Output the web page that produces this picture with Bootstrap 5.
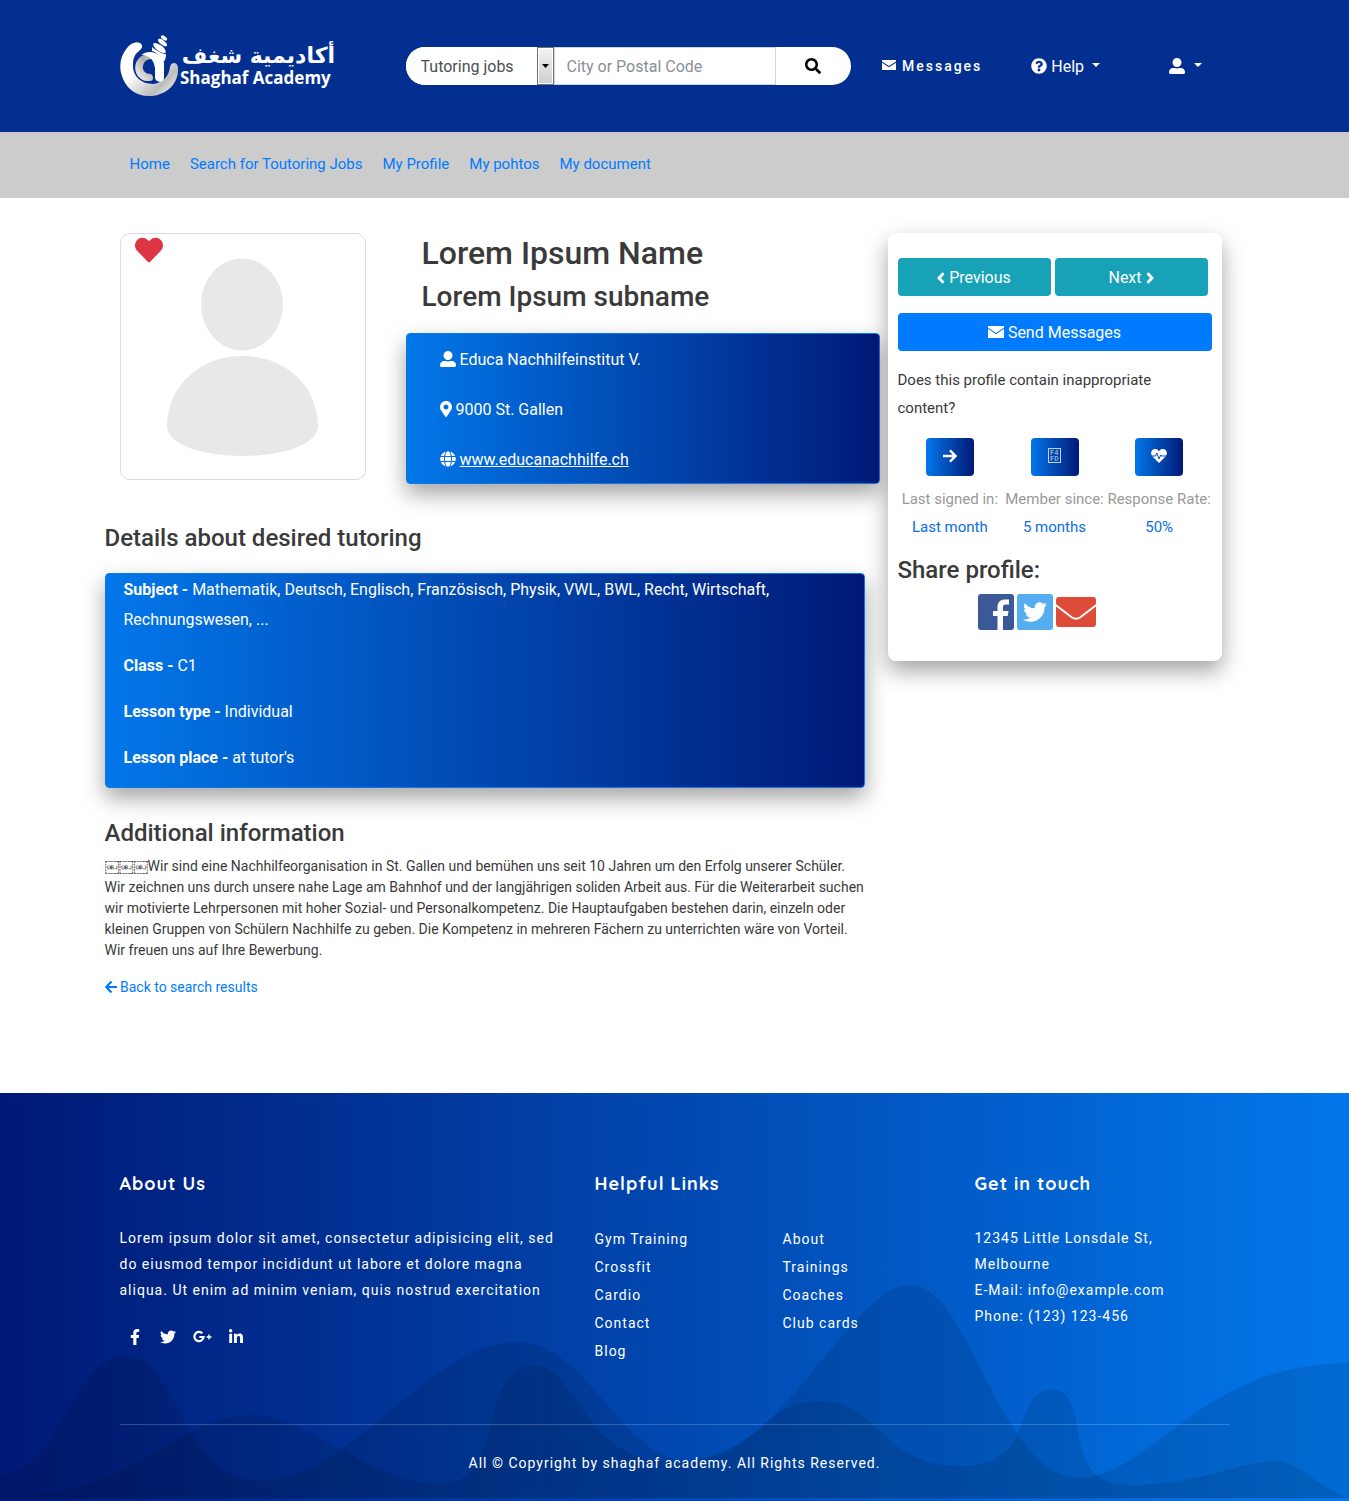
<!DOCTYPE html>
<html lang="en">
<head>
<meta charset="utf-8">
<meta name="viewport" content="width=device-width, initial-scale=1">
<title>Shaghaf Academy</title>
<link href="https://cdn.jsdelivr.net/npm/bootstrap@5.3.0/dist/css/bootstrap.min.css" rel="stylesheet">
<style>
body{font-family:Roboto,"Liberation Sans",sans-serif;color:#3a3a3a;font-size:14px;line-height:21px}
.container,.row{--bs-gutter-x:30px}
h1,h2,h3,h4{color:#3a3a3a;font-weight:500;line-height:1.2;margin:0}
.ico{width:16px;height:16px;fill:currentColor;vertical-align:-2px}
.site-head{background:#032f91;height:132px}
.logo-col{flex:0 0 301px;margin-right:-15px}
.search-box{width:445px;height:38px;border-radius:19px;overflow:hidden;background:#fff}
.search-box .form-select{flex:0 0 148px;border:0;border-radius:0;padding:2px 20px 0 15px;color:#495057;font-size:16px;
 background:#fff url("data:image/svg+xml,%3Csvg xmlns='http://www.w3.org/2000/svg' width='17' height='38'%3E%3Cdefs%3E%3ClinearGradient id='g' x2='0' y2='1'%3E%3Cstop stop-color='%23f2f2f2'/%3E%3Cstop offset='1' stop-color='%23cfcfcf'/%3E%3C/linearGradient%3E%3C/defs%3E%3Crect x='.5' y='.5' width='16' height='37' fill='%23fff' stroke='%23707070'/%3E%3Crect x='2' y='2' width='13' height='34' fill='url(%23g)'/%3E%3Cpath d='M5 17h7l-3.500 4z'/%3E%3C/svg%3E") no-repeat right center/17px 38px}
.search-box .form-control{border:1px solid #ced4da;border-radius:0;font-size:16px;padding:2px 12px 0}
.search-box .form-control::placeholder{color:#8a9097}
.search-box .btn{flex:0 0 75px;border:0;border-radius:0;color:#000;padding:2px 0 0}
.head-links{padding:0 28px 0 30px}
.head-links a{color:#fff;text-decoration:none;white-space:nowrap}
.head-links .drop{font-size:16px}
.head-links .msg-link{font-weight:500;letter-spacing:2px;font-size:14px;margin-right:49px}
.sub-nav{background:#ccc;font-size:15px;height:66px;padding-top:22px}
.sub-links{gap:20px;padding-left:10px}
.sub-nav a,.back-link{color:#007bff;text-decoration:none}
.page-main{padding-top:35px;padding-bottom:95px}
.photo-col{width:286px}
.photo-frame{width:246px;height:247px;border:1px solid #dcdcdc;border-radius:10px}
.fav{position:absolute;left:15px;top:3px;color:#dc3545;line-height:0}
.name-col{margin-right:-30px;padding-top:1px}
.name-main{font-size:32px}
.name-sub{font-size:28px;margin-top:8px}
.sec-title{font-size:24px}
.lift{box-shadow:0 10px 22px rgba(0,0,0,.36)}
.blue-panel{background:linear-gradient(to right,#0277ea,#001976);border:1px solid #0a78e6;border-radius:4px;color:#fff;font-size:16px;line-height:30px}
.info-panel{margin-top:19px;padding:11px 33px 8px}
.info-panel p{margin-bottom:20px}
.info-panel p:last-child{margin:0}
.info-panel a{color:#fff}
.detail-title{margin-top:40px}
.detail-panel{margin:20px -15px 31px;padding:1px 18px 0}
.detail-panel p:last-child{margin-bottom:14px}
.pull{margin-left:-15px;margin-right:-15px}
.side-card{margin:0 8px;padding:25px 10px 31px;border-radius:8px;background:#fff;font-size:15px;line-height:28px;position:relative}
.side-card .btn{height:38px;line-height:24px;border:0;border-radius:4px;color:#fff;font-size:16px;padding:7px 12px 5px}
.side-card .btn-teal{background:#18a2b8;flex:0 0 153px}
.side-card .btn-blue{background:#007bff;margin:17px 0 15px}
.side-card .btn-tile{width:48px;background:linear-gradient(to right,#0277ea,#001976);padding:0 0 4px;margin-bottom:9px}
.stat{flex:1 1 0;min-width:0;white-space:nowrap}
.stat-label{color:#999}
.stat-value{color:#0a6de4}
.share-title{margin-top:15px}
.share-row{gap:3px;padding:9px 0 0 80px}
.foot{background:linear-gradient(to left,#0277ea,#001976);color:#fff;padding-top:80px;letter-spacing:1px;line-height:26px}
.foot a{color:#fff;text-decoration:none}
.foot h3{font-family:Quicksand,Lato,sans-serif;font-weight:700;font-size:18px;color:#fff;line-height:22px;margin-bottom:30px}
.foot li{line-height:28px}
.foot address{line-height:26px}
.about-text{margin-bottom:22px}
.social{gap:17px;padding-left:7px}
.hills{position:absolute;left:0;bottom:3px;width:100%;height:213px}
.foot-links{gap:26px}
.foot-links ul{flex:1 1 0}
.copy{border-top:1px solid rgba(255,255,255,.2);padding:25px 0 25px;margin-top:59px}
</style>
</head>
<body>
<header class="site-head d-flex align-items-center">
 <div class="container d-flex align-items-center">
  <a class="logo-col text-decoration-none" href="#" aria-label="Shaghaf Academy">
   <svg width="216" height="64" viewBox="0 0 216 64">
    <defs><linearGradient id="ring" x1="0" y1="0" x2="1" y2="1"><stop offset=".4" stop-color="#fff"/><stop offset=".75" stop-color="#bdbdbd"/><stop offset="1" stop-color="#fff"/></linearGradient>
    <linearGradient id="bowl" x1="0" y1="1" x2="1" y2="0"><stop stop-color="#fff"/><stop offset=".6" stop-color="#aaa"/><stop offset="1" stop-color="#eee"/></linearGradient></defs>
    <path d="M20 9C16 7 11 9 7 14C1 21-1 30 1 39C5 55 17 63 31 62C48 61 59 48 58 34C58 28 51 27 50 33C49 43 42 49 33 50C21 50 12 42 13 30C13 24 15 20 19 17C23 14 23 11 20 9Z" fill="url(#ring)"/>
    <path d="M38 24C31 17 19 20 16 29C13 38 19 48 30 47C34 47 34 42 31 40C24 40 21 35 24 29C27 24 34 24 37 28Z" fill="url(#bowl)"/>
    <path d="M21 21C29 15 41 18 44 29V44C44 49 36 49 35 44V34C34 25 27 20 21 21Z" fill="#fff"/>
    <g fill="#fff"><ellipse cx="44" cy="4" rx="3.500" ry="1.800" transform="rotate(35 44 4)"/><ellipse cx="42.500" cy="8.500" rx="5.500" ry="2.300" transform="rotate(38 42.500 8.500)"/><ellipse cx="39.500" cy="14" rx="7.500" ry="3" transform="rotate(36 39.500 14)"/><path d="M32 13C37 17 42 20 46 20C46 24 45 27 43 28C41 22 36 18 32 17Z"/></g>
    <text x="215" y="29" text-anchor="end" font-family="DejaVu Sans" font-weight="700" font-size="22" fill="#fff">أكاديمية شغف</text>
    <text x="60" y="50" font-family="Open Sans,sans-serif" font-weight="700" font-size="17" fill="#fff">Shaghaf Academy</text>
   </svg>
  </a>
  <form class="search-box d-flex flex-shrink-0" onsubmit="return false">
   <select class="form-select" aria-label="Search type"><option>Tutoring jobs</option></select>
   <input class="form-control" type="text" placeholder="City or Postal Code" aria-label="City or Postal Code">
   <button class="btn" type="submit" aria-label="Search"><svg class="ico" viewBox="0 0 512 512"><path d="M505 442.700L405.300 343c-4.500-4.500-10.600-7-17-7H372c27.600-35.300 44-79.700 44-128C416 93.100 322.900 0 208 0S0 93.100 0 208s93.100 208 208 208c48.300 0 92.700-16.400 128-44v16.300c0 6.400 2.500 12.500 7 17l99.700 99.700c9.400 9.400 24.600 9.400 33.900 0l28.300-28.300c9.400-9.400 9.400-24.600.1-34zM208 336c-70.700 0-128-57.200-128-128 0-70.700 57.200-128 128-128 70.700 0 128 57.200 128 128 0 70.700-57.200 128-128 128z"/></svg></button>
  </form>
  <nav class="head-links d-flex flex-grow-1 align-items-center">
   <a class="msg-link" href="#"><svg class="ico" viewBox="0 0 16 16"><path d="M1 3h14v1.500L8 9 1 4.500zM1 5.700l7 4.600 7-4.600V13H1z"/></svg> Messages</a>
   <a class="drop dropdown-toggle" href="#"><svg class="ico" viewBox="0 0 512 512"><path d="M504 256c0 137-111 248-248 248S8 393 8 256C8 119 119 8 256 8s248 111 248 248zM262.700 90c-54.500 0-89.300 23-116.600 63.800-3.500 5.300-2.400 12.400 2.700 16.200l34.700 26.300c5.200 4 12.600 3 16.700-2.100 17.900-22.700 30.100-35.800 57.300-35.800 20.400 0 45.700 13.100 45.700 33 0 15-12.400 22.600-32.500 34C247.100 238.500 216 255 216 296v4c0 6.600 5.400 12 12 12h56c6.600 0 12-5.400 12-12v-1.300c0-28.500 83.200-29.700 83.200-106.700 0-58-60.200-102-116.500-102zM256 338c-25.400 0-46 20.600-46 46s20.600 46 46 46 46-20.600 46-46-20.600-46-46-46z"/></svg> Help&nbsp;</a>
   <a class="drop dropdown-toggle ms-auto" href="#" aria-label="Account"><svg class="ico" viewBox="0 0 512 512"><use href="#p-user"/></svg>&nbsp;</a>
  </nav>
 </div>
</header>

<svg width="0" height="0" class="position-absolute" aria-hidden="true"><defs>
 <path id="p-user" d="M256 288c79.500 0 144-64.500 144-144S335.500 0 256 0 112 64.500 112 144s64.500 144 144 144zm128 32h-55.100c-22.200 10.200-46.900 16-72.900 16s-50.600-5.800-72.900-16H128C57.300 320 0 377.300 0 448v16c0 26.500 21.500 48 48 48h416c26.500 0 48-21.500 48-48v-16c0-70.700-57.300-128-128-128z"/>
 <path id="p-tw" d="M459.400 151.700c.3 4.500.3 9.100.3 13.600 0 138.700-105.600 298.600-298.600 298.600-59.500 0-114.700-17.200-161.100-47.100 8.400 1 16.600 1.300 25.300 1.300 49.100 0 94.200-16.600 130.300-44.800-46.100-1-84.800-31.200-98.100-72.800 6.500 1 13 1.600 19.800 1.600 9.400 0 18.800-1.300 27.600-3.600-48.100-9.700-84.100-52-84.100-103v-1.300c14 7.800 30.200 12.700 47.400 13.300-28.300-18.800-46.800-51-46.800-87.400 0-19.500 5.200-37.400 14.300-53 51.700 63.700 129.300 105.300 216.400 109.800-1.600-7.800-2.600-15.900-2.600-24 0-57.800 46.800-104.900 104.900-104.900 30.200 0 57.500 12.700 76.700 33.100 23.700-4.500 46.500-13.300 66.600-25.300-7.800 24.400-24.400 44.800-46.100 57.800 21.100-2.300 41.600-8.100 60.400-16.200-14.300 20.800-32.200 39.300-52.600 54.300z"/>
 <path id="p-fb" d="M279.100 288l14.200-92.700h-88.900v-60.100c0-25.400 12.400-50.100 52.200-50.100h40.400V6.300S260.400 0 225.400 0c-73.200 0-121.100 44.400-121.100 124.700v70.600H22.900V288h81.400v224h100.200V288z"/>
</defs></svg>

<nav class="sub-nav">
 <div class="container">
  <div class="sub-links d-flex">
   <a href="#">Home</a><a href="#">Search for Toutoring Jobs</a><a href="#">My Profile</a><a href="#">My pohtos</a><a href="#">My document</a>
  </div>
 </div>
</nav>

<main class="container page-main">
 <div class="row">
  <div class="col-8">
   <div class="d-flex">
    <div class="photo-col flex-shrink-0 position-relative">
     <div class="photo-frame">
      <svg width="244" height="245" viewBox="0 0 244 245" role="img" aria-label="Profile photo"><g fill="#e8e8e8"><ellipse cx="121" cy="70.500" rx="41" ry="46"/><path d="M46 192C47 150 80 122 121.500 122S196 150 197 192C197 211 160 222 121.500 222S46 211 46 192Z"/></g></svg>
     </div>
     <span class="fav"><svg width="28" height="28" viewBox="0 0 512 512" fill="currentColor"><path d="M462.300 62.600C407.500 15.900 326 24.300 275.700 76.200L256 96.500l-19.700-20.300C186.100 24.300 104.500 15.900 49.700 62.600c-62.800 53.600-66.100 149.800-9.900 207.900l193.500 199.800c12.500 12.900 32.800 12.900 45.300 0l193.500-199.800c56.300-58.100 53-154.300-9.800-207.900z"/></svg></span>
    </div>
    <div class="name-col flex-grow-1">
     <div class="ps-3">
      <h1 class="name-main">Lorem Ipsum Name</h1>
      <h2 class="name-sub">Lorem Ipsum subname</h2>
     </div>
     <div class="blue-panel lift info-panel">
      <p><svg class="ico" viewBox="0 0 512 512"><use href="#p-user"/></svg> Educa Nachhilfeinstitut V.</p>
      <p><svg class="ico" style="width:12px" viewBox="0 0 384 512"><path d="M172.300 501.700C27 291 0 269.400 0 192 0 86 86 0 192 0s192 86 192 192c0 77.400-27 99-172.300 309.700-9.500 13.800-29.900 13.800-39.400 0zM192 272c44.200 0 80-35.800 80-80s-35.800-80-80-80-80 35.800-80 80 35.800 80 80 80z"/></svg> 9000 St. Gallen</p>
      <p><svg class="ico" viewBox="0 0 496 512"><path d="M336.500 160C322 70.700 287.800 8 248 8s-74 62.700-88.500 152h177zM152 256c0 22.200 1.200 43.500 3.300 64h185.300c2.100-20.500 3.300-41.800 3.300-64s-1.200-43.500-3.300-64H155.300c-2.100 20.500-3.300 41.800-3.300 64zm324.700-96c-28.600-67.900-86.500-120.400-158-141.600 24.400 33.800 41.200 84.700 50 141.600h108zM177.200 18.400C105.800 39.600 47.800 92.100 19.300 160h108c8.700-56.900 25.500-107.800 49.900-141.600zM487.400 192H372.700c2.100 21 3.300 42.500 3.300 64s-1.200 43-3.300 64h114.600c5.500-20.500 8.600-41.800 8.600-64s-3.100-43.500-8.500-64zM120 256c0-21.500 1.200-43 3.300-64H8.600C3.200 212.500 0 233.800 0 256s3.200 43.500 8.600 64h114.600c-2-21-3.200-42.500-3.200-64zm39.500 96c14.500 89.300 48.700 152 88.500 152s74-62.700 88.500-152h-177zm159.300 141.600c71.400-21.200 129.400-73.700 158-141.600h-108c-8.800 56.900-25.600 107.800-50 141.600zM19.300 352c28.600 67.900 86.500 120.400 158 141.600-24.400-33.800-41.200-84.700-50-141.600h-108z"/></svg> <a href="#">www.educanachhilfe.ch</a></p>
     </div>
    </div>
   </div>
   <h3 class="sec-title detail-title pull">Details about desired tutoring</h3>
   <div class="blue-panel lift detail-panel">
    <p><b>Subject -</b> Mathematik, Deutsch, Englisch, Französisch, Physik, VWL, BWL, Recht, Wirtschaft, Rechnungswesen, ...</p>
    <p><b>Class -</b> C1</p>
    <p><b>Lesson type -</b> Individual</p>
    <p><b>Lesson place -</b> at tutor's</p>
   </div>
   <div class="pull">
    <h3 class="sec-title mb-2">Additional information</h3>
    <p>&#xFFFC;&#xFFFC;&#xFFFC;Wir sind eine Nachhilfeorganisation in St. Gallen und bemühen uns seit 10 Jahren um den Erfolg unserer Schüler. Wir zeichnen uns durch unsere nahe Lage am Bahnhof und der langjährigen soliden Arbeit aus. Für die Weiterarbeit suchen wir motivierte Lehrpersonen mit hoher Sozial- und Personalkompetenz. Die Hauptaufgaben bestehen darin, einzeln oder kleinen Gruppen von Schülern Nachhilfe zu geben. Die Kompetenz in mehreren Fächern zu unterrichten wäre von Vorteil. Wir freuen uns auf Ihre Bewerbung.</p>
    <a class="back-link" href="#"><svg class="ico" style="width:12px;height:14px" viewBox="0 0 12 14"><path d="M6.500 1.500L1.300 7l5.200 5.500M1.500 7H12" fill="none" stroke="currentColor" stroke-width="2.200"/></svg> Back to search results</a>
   </div>
  </div>

  <aside class="col-4">
   <div class="side-card lift">
    <div class="d-flex gap-1">
     <button class="btn btn-teal" type="button"><svg width="8" height="12" viewBox="0 0 8 12" style="vertical-align:-1px"><path d="M6.500 1.200L2 6l4.500 4.800" fill="none" stroke="#fff" stroke-width="2.800"/></svg> Previous</button>
     <button class="btn btn-teal" type="button">Next <svg width="8" height="12" viewBox="0 0 8 12" style="vertical-align:-1px"><path d="M1.500 1.200L6 6l-4.500 4.800" fill="none" stroke="#fff" stroke-width="2.800"/></svg></button>
    </div>
    <button class="btn btn-blue w-100" type="button"><svg class="ico" viewBox="0 0 16 16"><path d="M0 2h16v1.500L8 9 0 3.500zM0 4.700L8 10.200l8-5.500V14H0z"/></svg> Send Messages</button>
    <p class="mb-3 pe-5">Does this profile contain inappropriate content?</p>
    <div class="d-flex text-center">
     <div class="stat"><button class="btn btn-tile" type="button" aria-label="Last signed in"><svg width="14" height="14" viewBox="0 0 14 14"><path d="M0 7h12M7 1.300L12.600 7 7 12.700" fill="none" stroke="#fff" stroke-width="2.400"/></svg></button><div class="stat-label">Last signed in:</div><div class="stat-value">Last month</div></div>
     <div class="stat"><button class="btn btn-tile" type="button" aria-label="Member since"><svg width="13" height="15" viewBox="0 0 13 15" fill="#c5d2ee"><rect x=".5" y=".5" width="12" height="14" fill="none" stroke="#c5d2ee"/><text x="2" y="7" font-size="7" font-family="Liberation Mono">F4</text><text x="2" y="13" font-size="7" font-family="Liberation Mono">FD</text></svg></button><div class="stat-label">Member since:</div><div class="stat-value">5 months</div></div>
     <div class="stat"><button class="btn btn-tile" type="button" aria-label="Response rate"><svg width="16" height="14" viewBox="0 0 16 14"><path d="M8 2.200C6-.6 2.500-.4 1 1.600-.4 3.600 0 6 1.500 7.500L8 14l6.500-6.500C16 6 16.400 3.600 15 1.600 13.500-.4 10-.6 8 2.200Z" fill="#fff"/><path d="M0 7h4.500l1.300-3L8 10l1.700-4 .8 1H16" fill="none" stroke="#0349ab" stroke-width="1"/></svg></button><div class="stat-label">Response Rate:</div><div class="stat-value">50%</div></div>
    </div>
    <h3 class="sec-title share-title">Share profile:</h3>
    <div class="share-row d-flex align-items-center">
     <a href="#" aria-label="Facebook" class="d-flex"><svg width="36" height="36" viewBox="0 0 36 36"><rect width="36" height="36" rx="3" fill="#3b5998"/><path d="M19.500 36V22H15v-5h4.500v-4c0-5 3-7.500 7.500-7.500H31v5h-3c-2.300 0-3 1-3 3V17h5.500l-.8 5H25v14z" fill="#fff"/></svg></a>
     <a href="#" aria-label="Twitter" class="d-flex"><svg width="36" height="36" viewBox="0 0 36 36"><rect width="36" height="36" rx="3" fill="#55acee"/><svg x="6" y="6" width="24" height="24" viewBox="0 0 512 512" fill="#fff"><use href="#p-tw"/></svg></svg></a>
     <a href="#" aria-label="E-mail" class="d-flex"><svg width="40" height="30" viewBox="0 0 40 30"><rect width="40" height="30" rx="3" fill="#dd4b39"/><path d="M-1 7.500L16 20.500Q20 23 24 20.500L41 7.500" fill="none" stroke="#fff" stroke-width="2"/></svg></a>
    </div>
   </div>
  </aside>
 </div>
</main>

<footer class="foot position-relative">
 <svg class="hills" viewBox="0 1285 1349 213" preserveAspectRatio="none" fill="#000" fill-opacity=".1" aria-hidden="true">
  <path d="M0 1474C60 1474 70 1356 126 1356C180 1356 180 1481 261 1481C350 1481 430 1342 516 1342C590 1342 620 1461 690 1461C780 1461 850 1285 911 1285C970 1285 1000 1478 1079 1478C1150 1478 1200 1363 1349 1363V1498H0Z"/>
  <path d="M0 1498C130 1498 180 1415 250 1415C310 1415 370 1484 440 1484C510 1484 475 1366 533 1366C580 1366 580 1461 670 1461C760 1461 760 1401 820 1401C880 1401 880 1466 960 1466C1040 1466 1010 1390 1052 1390C1095 1390 1055 1485 1130 1485C1200 1485 1240 1461 1275 1461C1300 1461 1320 1490 1349 1498Z"/>
 </svg>
 <div class="container position-relative">
  <div class="row">
   <div class="col-5">
    <h3>About Us</h3>
    <p class="about-text">Lorem ipsum dolor sit amet, consectetur adipisicing elit, sed do eiusmod tempor incididunt ut labore et dolore magna aliqua. Ut enim ad minim veniam, quis nostrud exercitation</p>
    <div class="social d-flex align-items-center">
     <a href="#" aria-label="Facebook"><svg class="ico" viewBox="-96 0 512 512"><use href="#p-fb"/></svg></a>
     <a href="#" aria-label="Twitter"><svg class="ico" viewBox="0 0 512 512"><use href="#p-tw"/></svg></a>
     <a href="#" aria-label="Google Plus"><svg width="19" height="16" viewBox="0 0 19 16" style="vertical-align:-2px"><path d="M9.300 4.300A4.600 4.600 0 1 0 10.600 8H6.300" fill="none" stroke="#fff" stroke-width="2.200"/><path d="M16 5.500v5M13.500 8h5" stroke="#fff" stroke-width="1.400"/></svg></a>
     <a href="#" aria-label="LinkedIn"><svg width="14" height="16" viewBox="0 0 448 512" fill="#fff" style="vertical-align:-2px"><path d="M100.300 448H7.400V148.900h92.900zM53.800 108.100C24.100 108.100 0 83.500 0 53.800a53.800 53.800 0 0 1 107.600 0c0 29.700-24.100 54.300-53.800 54.300zM447.900 448h-92.700V302.400c0-34.700-.7-79.200-48.300-79.200-48.300 0-55.700 37.700-55.700 76.700V448h-92.800V148.900h89.100v40.800h1.300c12.400-23.500 42.700-48.300 87.900-48.300 94 0 111.300 61.900 111.300 142.300V448z"/></svg></a>
    </div>
   </div>
   <div class="col-4">
    <h3>Helpful Links</h3>
    <div class="foot-links d-flex">
     <ul class="list-unstyled mb-0"><li><a href="#">Gym Training</a></li><li><a href="#">Crossfit</a></li><li><a href="#">Cardio</a></li><li><a href="#">Contact</a></li><li><a href="#">Blog</a></li></ul>
     <ul class="list-unstyled mb-0"><li><a href="#">About</a></li><li><a href="#">Trainings</a></li><li><a href="#">Coaches</a></li><li><a href="#">Club cards</a></li></ul>
    </div>
   </div>
   <div class="col-3">
    <h3>Get in touch</h3>
    <address class="mb-0">12345 Little Lonsdale St,<br>Melbourne<br>E-Mail: info@example.com<br>Phone: (123) 123-456</address>
   </div>
  </div>
  <div class="copy text-center">All © Copyright by shaghaf academy. All Rights Reserved.</div>
 </div>
</footer>
<script src="https://cdn.jsdelivr.net/npm/bootstrap@5.3.0/dist/js/bootstrap.bundle.min.js"></script>
</body>
</html>
